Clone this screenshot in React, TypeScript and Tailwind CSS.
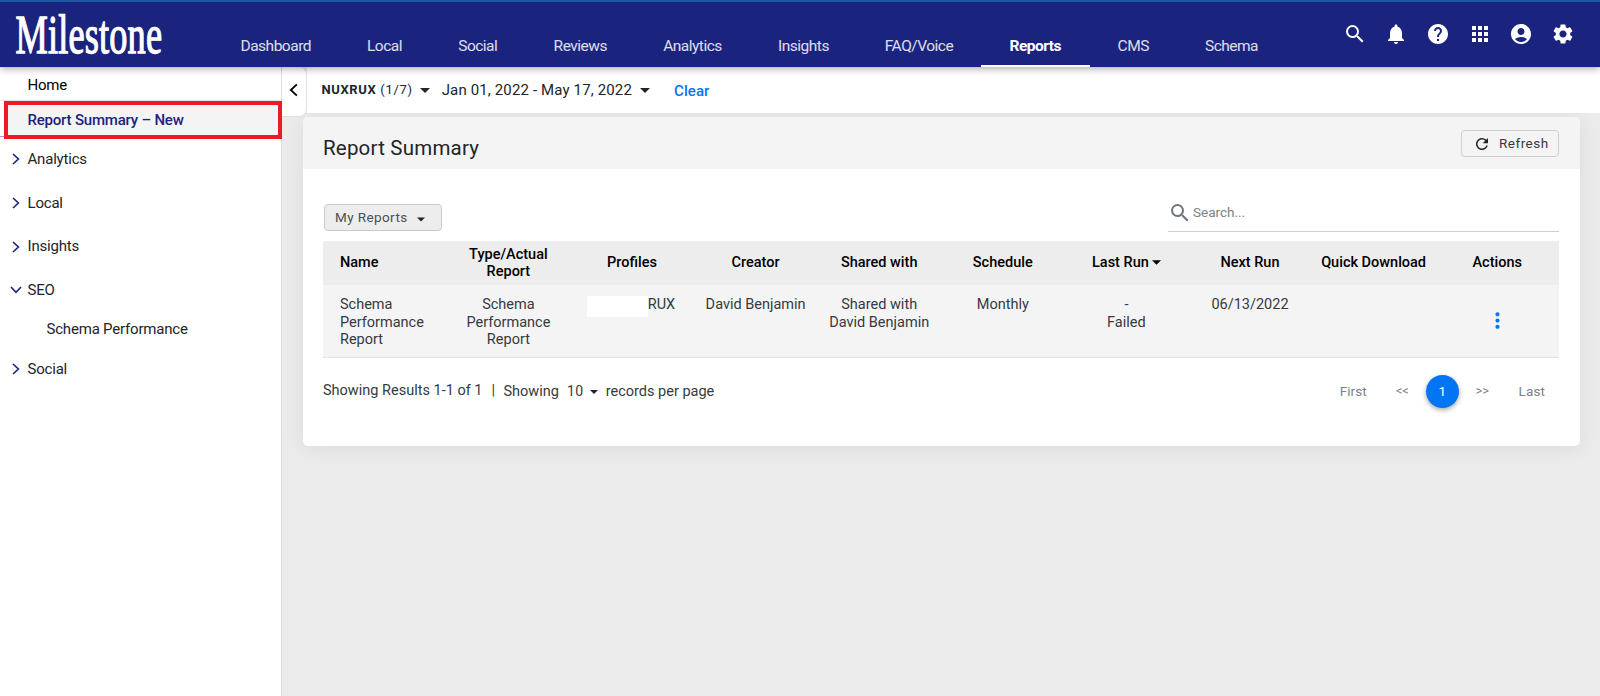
import type { ReactNode } from "react";
import {
  MdAccountCircle,
  MdApps,
  MdHelp,
  MdMoreVert,
  MdNotifications,
  MdRefresh,
  MdSearch,
  MdSettings
} from "react-icons/md";

const navItems = [
  { label: "Dashboard", width: "w-[126.5px]" },
  { label: "Local", width: "w-[91px]" },
  { label: "Social", width: "w-[95.5px]" },
  { label: "Reviews", width: "w-[109.5px]" },
  { label: "Analytics", width: "w-[115px]" },
  { label: "Insights", width: "w-[107px]" },
  { label: "FAQ/Voice", width: "w-[124px]" },
  { label: "Reports", width: "w-[108.5px]", active: true },
  { label: "CMS", width: "w-[87.5px]" },
  { label: "Schema", width: "w-[109px]" }
];

function Caret({ className = "" }: { className?: string }) {
  return (
    <svg viewBox="0 0 10 5" className={className} fill="currentColor">
      <path d="M0 0h10L5 5z" />
    </svg>
  );
}

function Chevron({ className = "" }: { className?: string }) {
  return (
    <svg
      viewBox="0 0 8 12"
      className={className}
      fill="none"
      stroke="currentColor"
      strokeWidth="1.6"
    >
      <path d="M1 1l5.4 5L1 11" />
    </svg>
  );
}

function Header() {
  return (
    <header className="relative z-20 flex h-[67px] shrink-0 border-t-2 border-[#1d59a3] bg-[#1a237e] text-white shadow-[0_1px_8px_rgba(0,0,0,0.4)]">
      <div className="w-[212.5px] shrink-0">
        <svg width="180" height="65" fill="#fff" stroke="#fff" strokeWidth="1.3">
          <text
            x="0"
            y="0"
            transform="translate(15.5 50.5) scale(0.66 1)"
            textLength="222"
            fontFamily="Liberation Serif, serif"
            fontSize="55"
          >
            Milestone
          </text>
        </svg>
      </div>
      <nav className="flex">
        {navItems.map((item) => (
          <div
            key={item.label}
            className={`flex justify-center border-b-2 pt-[34px] text-[15.5px] leading-5 ${item.width} ${
              item.active
                ? "border-white font-bold tracking-[-0.5px]"
                : "border-transparent tracking-[-0.5px] text-white/85"
            }`}
          >
            {item.label}
          </div>
        ))}
      </nav>
      <div className="ml-auto flex gap-[17.7px] pt-5 pr-[25px]">
        <MdSearch size={24} />
        <MdNotifications size={24} />
        <MdHelp size={24} />
        <MdApps size={24} />
        <MdAccountCircle size={24} />
        <MdSettings size={24} />
      </div>
    </header>
  );
}

function SidebarGroup({
  label,
  open = false
}: {
  label: string;
  open?: boolean;
}) {
  return (
    <div className="flex h-[43.7px] items-center">
      <span className="flex w-[27.5px] justify-center pl-1">
        <Chevron
          className={`h-3 w-2 text-[#1a237e] ${open ? "rotate-90" : ""}`}
        />
      </span>
      {label}
    </div>
  );
}

function Sidebar() {
  return (
    <aside className="w-[282px] shrink-0 border-r border-[#dcdce0] bg-white text-[15px] tracking-[-0.2px] text-[#212529]">
      <div className="flex h-[34px] items-center border-b border-[#e6e6ea] pt-1 pl-[27.5px] text-black">
        Home
      </div>
      {/* Highlighted entry */}
      <div className="-mb-[1.6px] flex h-[38px] items-end">
        <div className="mb-[2px] h-px w-1 bg-[#9a9fd0]" />
        <div className="relative z-10 -mr-px flex h-[38px] flex-1 items-center border-4 border-[#ed1c24] bg-[#f4f4f4] pl-[19.5px] font-medium text-[#1a237e]">
          Report Summary – New
        </div>
      </div>
      <SidebarGroup label="Analytics" />
      <SidebarGroup label="Local" />
      <SidebarGroup label="Insights" />
      <SidebarGroup label="SEO" open />
      <div className="flex h-[35px] items-center pl-[46.5px]">
        Schema Performance
      </div>
      <SidebarGroup label="Social" />
    </aside>
  );
}

function FilterBar() {
  return (
    <div className="flex h-[46px] text-[#212529]">
      <div className="flex h-[50px] w-[25px] items-center justify-center rounded-r-[8px] border-r border-b border-[#dfdfe3] bg-white pr-[2px] pb-[3px]">
        <Chevron className="h-[14px] w-[9px] rotate-180 text-black" />
      </div>
      <div className="flex flex-1 items-center bg-white pl-[14.5px] text-[15px]">
        <span className="text-[13px] font-bold tracking-[0.6px]">NUXRUX</span>
        <span className="ml-1 text-[13px] tracking-[0.7px]">(1/7)</span>
        <Caret className="ml-[7px] h-[5px] w-[10px]" />
        <span className="ml-[12px] tracking-[0.14px]">
          Jan 01, 2022 - May 17, 2022
        </span>
        <Caret className="ml-[8px] h-[5px] w-[10px]" />
        <span className="ml-[24px] pt-[2px] font-medium tracking-[0.1px] text-[#0275f4]">
          Clear
        </span>
      </div>
    </div>
  );
}

function Cell({
  children,
  className = ""
}: {
  children?: ReactNode;
  className?: string;
}) {
  return <div className={`text-center ${className}`}>{children}</div>;
}

function ReportTable() {
  return (
    <div className="text-[14.5px]">
      {/* Table Header */}
      <div className="grid h-11 grid-cols-10 items-center bg-[#ededed] pb-px leading-[17px] font-medium text-black">
        <div className="pl-[17px]">Name</div>
        <Cell>
          Type/Actual
          <br />
          Report
        </Cell>
        <Cell>Profiles</Cell>
        <Cell>Creator</Cell>
        <Cell>Shared with</Cell>
        <Cell>Schedule</Cell>
        <Cell className="flex items-center justify-center gap-[3px]">
          Last Run
          <Caret className="h-[5px] w-[9px]" />
        </Cell>
        <Cell>Next Run</Cell>
        <Cell>Quick Download</Cell>
        <Cell>Actions</Cell>
      </div>

      {/* Rows */}
      <div className="grid h-[73px] grid-cols-10 border-b border-[#e2e3e5] bg-[#f4f4f4] pt-[11px] leading-[17.6px] text-[#343a40]">
        <div className="pl-[17px]">
          Schema
          <br />
          Performance
          <br />
          Report
        </div>
        <Cell>
          Schema
          <br />
          Performance
          <br />
          Report
        </Cell>
        <Cell className="flex items-start justify-center pr-[2px]">
          <span className="h-[21px] w-[61px] bg-white" />
          RUX
        </Cell>
        <Cell>David Benjamin</Cell>
        <Cell>
          Shared with
          <br />
          David Benjamin
        </Cell>
        <Cell>Monthly</Cell>
        <Cell>
          -<br />
          Failed
        </Cell>
        <Cell>06/13/2022</Cell>
        <Cell />
        <Cell className="flex justify-center pt-[12px]">
          <MdMoreVert size={25} className="text-[#0275f4]" />
        </Cell>
      </div>
    </div>
  );
}

function TableFooter() {
  return (
    <div className="mt-[16px] flex h-[34px] items-center text-[14.5px] text-[#343a40]">
      <span className="pb-px">Showing Results 1-1 of 1</span>
      <span className="ml-[9px] pb-px">|</span>
      <span className="ml-[8.5px] pt-px">Showing</span>
      <span className="ml-[8px] pt-px text-[14px] tracking-[0.5px]">10</span>
      <Caret className="mt-px ml-[6px] h-1 w-2 text-[#212529]" />
      <span className="ml-[8px] pt-px">records per page</span>
      <div className="ml-auto flex items-center pr-[14px] text-[13.5px] tracking-[0.1px] text-[#7b828a]">
        <span>First</span>
        <span className="ml-[29px] text-[12.5px]">&lt;&lt;</span>
        <span className="ml-[17px] flex size-[33px] items-center justify-center rounded-full bg-[#0275f4] text-white shadow-[0_2px_5px_rgba(0,0,0,0.35)]">
          1
        </span>
        <span className="ml-[17px] text-[12.5px]">&gt;&gt;</span>
        <span className="ml-[29.5px]">Last</span>
      </div>
    </div>
  );
}

function ReportCard() {
  return (
    <section className="mt-1 mr-5 ml-[20.5px] h-[329px] overflow-hidden rounded-[5px] bg-white shadow-[0_2px_20px_rgba(0,0,0,0.07)]">
      <div className="flex h-[52px] items-start justify-between bg-[#f4f4f4] pr-[21px] pl-[20.5px]">
        <h1 className="pt-[17px] text-[20.5px] leading-7 tracking-[0.2px] text-[#212529]">
          Report Summary
        </h1>
        <button className="mt-[13px] flex h-[27px] w-[98px] items-center rounded-[4px] border border-[#cfcfcf] pl-[11px] text-[13.5px] tracking-[0.5px] text-[#343a40]">
          <MdRefresh size={18} className="mr-[8px] shrink-0 text-[#212529]" />
          Refresh
        </button>
      </div>
      <div className="pr-[21px] pl-[20.5px]">
        <div className="flex h-[72px] justify-between">
          <button className="mt-[35px] ml-px flex h-[27px] w-[118px] items-center rounded-[4px] border border-[#cacaca] bg-[#ededed] pl-[10px] text-[13.5px] tracking-[0.4px] text-[#495057]">
            My Reports
            <Caret className="mt-[3px] ml-[9px] h-[5px] w-[8px] text-[#212529]" />
          </button>
          <div className="mt-[25px] flex h-[38px] w-[391px] items-center border-b border-[#cfcfcf] text-[#7b828a]">
            <MdSearch size={24} className="text-[#6c757d]" />
            <span className="ml-[1px] text-[13.5px]">Search...</span>
          </div>
        </div>
        <ReportTable />
        <TableFooter />
      </div>
    </section>
  );
}

export default function App() {
  return (
    <div className="flex h-[696px] w-[1600px] flex-col overflow-hidden bg-[#ebebeb] font-[Roboto,sans-serif]">
      <Header />
      <div className="flex flex-1">
        <Sidebar />
        <main className="flex-1">
          <FilterBar />
          <ReportCard />
        </main>
      </div>
    </div>
  );
}
